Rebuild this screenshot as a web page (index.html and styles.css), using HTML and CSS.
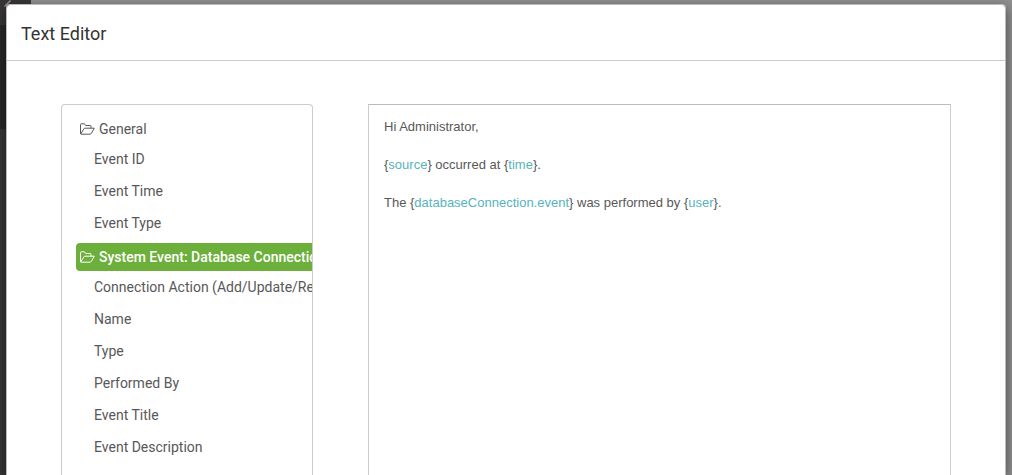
FILE: index.html
```html
<!DOCTYPE html>
<html lang="en">
<head>
<meta charset="utf-8">
<title>Text Editor</title>
<link rel="stylesheet" href="styles.css">
</head>
<body>
<svg class="symbols" aria-hidden="true">
  <symbol id="folder-open" viewBox="0 0 16 12">
    <path d="M1.5 10.8V1.5Q1.5.8 2.2.8H5.4L6.6 2.5H11.2Q12 2.5 12 3.3V5.2M1.7 11L4.8 5.9Q5.2 5.2 5.9 5.2H15.3L12.3 10.4Q11.9 11.2 11 11.2H2.1Q1.5 11.2 1.5 10.6" fill="none" stroke="currentColor" stroke-width="1" stroke-linejoin="round"/>
  </symbol>
</svg>
<svg class="backdrop-mark" viewBox="0 0 12 8" aria-hidden="true"><path d="M4.5 6.5L10.5.5" stroke="#999" stroke-width="1.3"/></svg>
<main class="modal" role="dialog" aria-labelledby="dialog-title">
  <header class="modal-header">
    <h1 class="modal-title" id="dialog-title">Text Editor</h1>
  </header>
  <div class="modal-body">
    <nav class="tree" aria-label="Event properties">
      <section class="group">
        <button class="group-title" type="button"><svg class="folder" aria-hidden="true"><use href="#folder-open"/></svg>General</button>
        <ul class="items">
          <li><button class="item" type="button">Event ID</button></li>
          <li><button class="item" type="button">Event Time</button></li>
          <li><button class="item" type="button">Event Type</button></li>
        </ul>
      </section>
      <section class="group">
        <button class="group-title selected" type="button"><svg class="folder" aria-hidden="true"><use href="#folder-open"/></svg>System Event: Database Connection</button>
        <ul class="items">
          <li><button class="item" type="button">Connection Action (Add/Update/Remove)</button></li>
          <li><button class="item" type="button">Name</button></li>
          <li><button class="item" type="button">Type</button></li>
          <li><button class="item" type="button">Performed By</button></li>
          <li><button class="item" type="button">Event Title</button></li>
          <li><button class="item" type="button">Event Description</button></li>
        </ul>
      </section>
    </nav>
    <div class="editor" role="textbox" aria-multiline="true" aria-label="Message" contenteditable="true" spellcheck="false">
      <p class="line">Hi Administrator,</p>
      <p class="line">{<span class="token">source</span>} occurred at {<span class="token">time</span>}.</p>
      <p class="line">The {<span class="token">databaseConnection.event</span>} was performed by {<span class="token">user</span>}.</p>
    </div>
  </div>
</main>
</body>
</html>
```
FILE: styles.css
```css
* {
  box-sizing: border-box;
}

body {
  margin: 0;
  min-height: 100vh;
  overflow: hidden;
  padding: 4px 6px 0;
  display: flex;
  background:
    linear-gradient(#282828, #282828) 0 25px / 31px 104px no-repeat,
    linear-gradient(90deg, #383536 31px, #8f8f8f 31px);
  font-family: Roboto, sans-serif;
  color: #585858;
}

.symbols {
  position: absolute;
  width: 0;
  height: 0;
}

.backdrop-mark {
  position: absolute;
  top: 0;
  left: 0;
  width: 12px;
  height: 8px;
}

.modal {
  position: relative;
  flex: 1;
  min-width: 0;
  display: flex;
  flex-direction: column;
  border: 1px solid #bbb;
  border-bottom: 0;
  border-radius: 4px 4px 0 0;
  background: #fff;
  background-clip: padding-box;
  box-shadow: 0 4px 12px rgba(0, 0, 0, 0.5);
}

.modal-header {
  padding: 17px 14px 14px;
  border-bottom: 1px solid #ccc;
}

.modal-title {
  margin: 0;
  font-size: 18px;
  font-weight: 400;
  line-height: 24px;
  color: #333;
}

.modal-body {
  flex: 1;
  display: flex;
  gap: 55px;
  padding: 43px 54px 0;
}

.tree {
  flex: 0 0 252px;
  overflow: hidden;
  padding: 10px 0 0 14px;
  border: 1px solid #ccc;
  border-bottom: 0;
  border-radius: 4px 4px 0 0;
}

.group {
  margin-bottom: 4px;
}

.group-title,
.item {
  display: flex;
  align-items: center;
  width: 100%;
  border: 0;
  background: none;
  font: 400 14px/20px Roboto, sans-serif;
  color: inherit;
  text-align: left;
  white-space: nowrap;
}

.group-title {
  gap: 4px;
  height: 28px;
  padding: 0 0 0 3px;
}

.group-title.selected {
  border-radius: 4px 0 0 4px;
  background: #6caf3a;
  color: #fff;
  font-weight: 500;
}

.folder {
  flex: none;
  width: 16px;
  height: 12px;
}

.items {
  margin: 0;
  padding: 0;
  list-style: none;
}

.item {
  height: 32px;
  padding: 0 0 0 18px;
}

.editor {
  flex: 1;
  min-width: 0;
  padding: 12px 15px;
  border: 1px solid #ccc;
  border-top-color: #bbb;
  border-bottom: 0;
  outline: 0;
  font: 13px/19px "Liberation Sans", Arial, sans-serif;
}

.line {
  margin: 0 0 19px;
}

.token {
  color: #56b4bb;
}
```
